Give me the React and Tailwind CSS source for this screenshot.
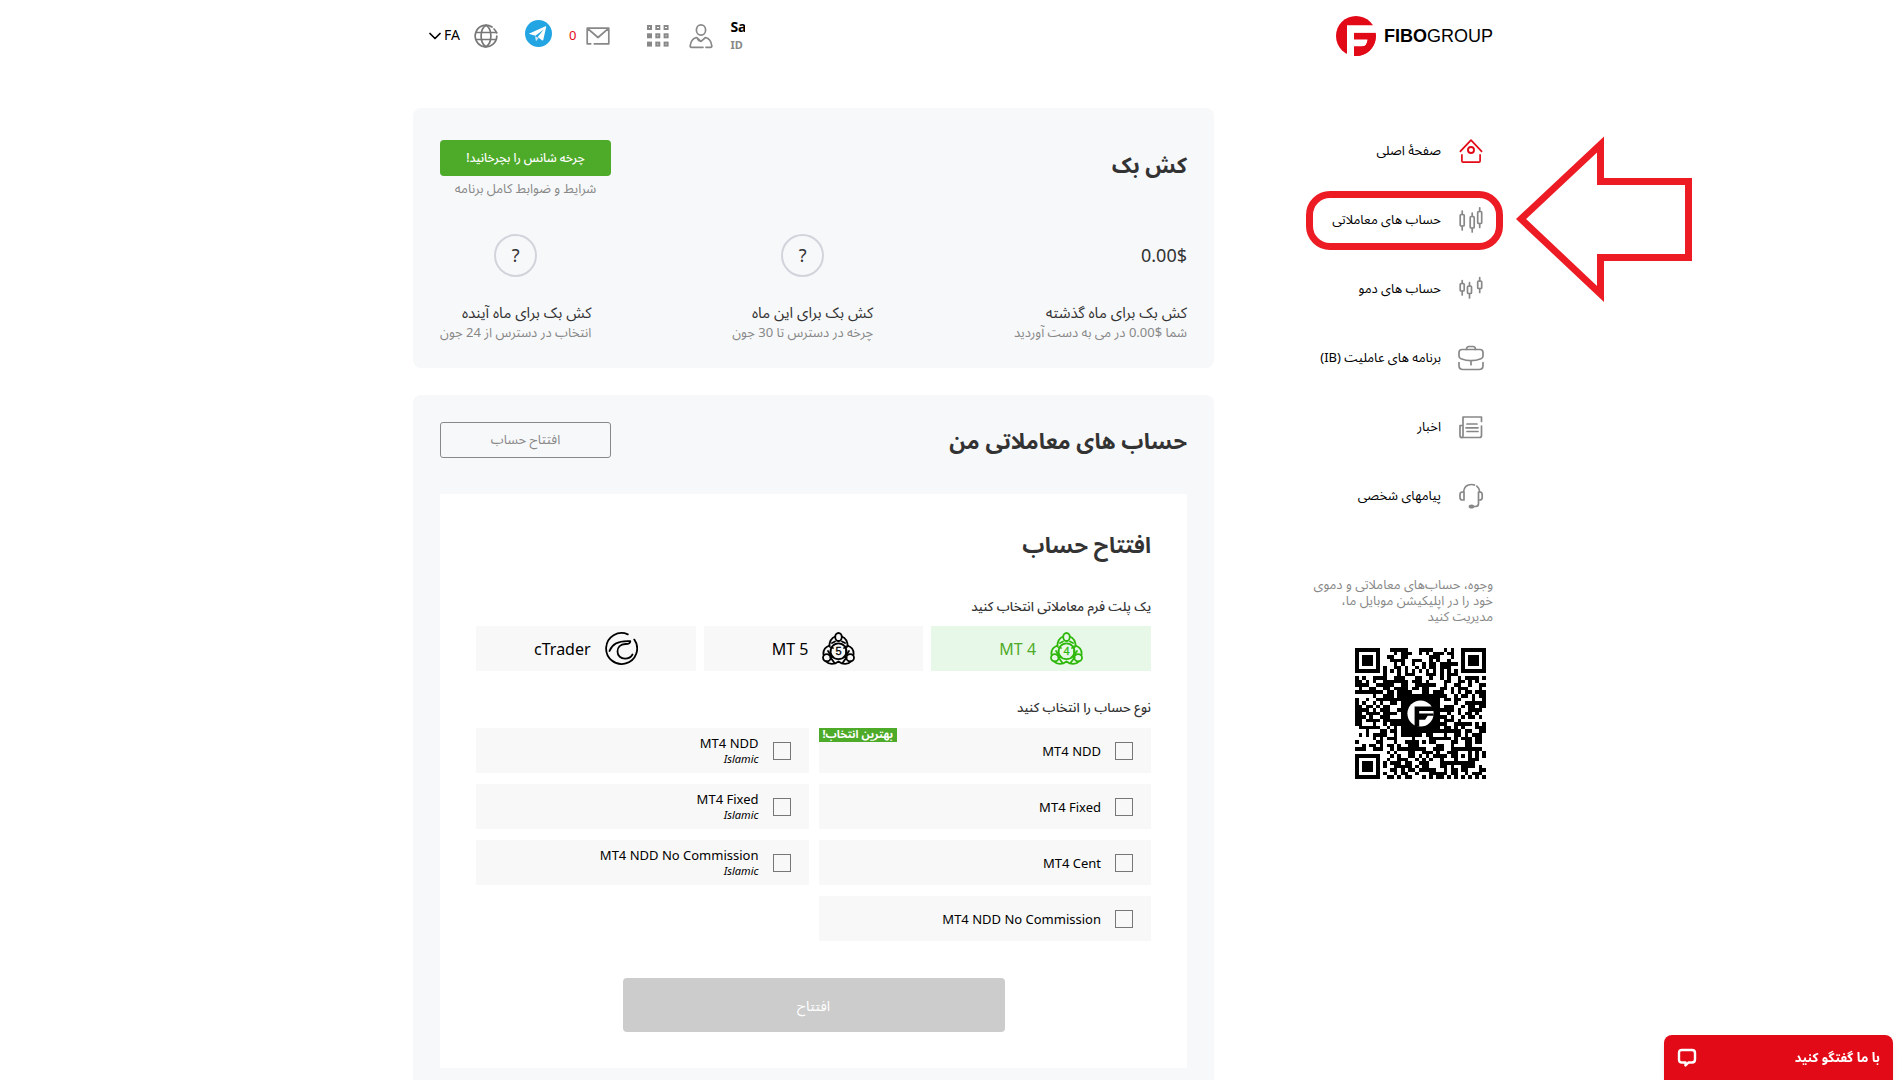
import React from "react";

const svgBase = {
  fill: "none",
  stroke: "currentColor",
  strokeWidth: 1.7,
  strokeLinecap: "round",
  strokeLinejoin: "round",
  "aria-hidden": true,
};

function HomeIcon() {
  return (
    <svg viewBox="0 0 24 26" className="h-[26px] w-6 text-[#e30a17]" {...svgBase} strokeLinecap="square">
      <path d="M1.500 13.200 12 2.200 22.500 13.200" />
      <circle cx="12" cy="12" r="3" strokeWidth="1.900" />
      <path d="M2.900 17v6q0 1.200 1.200 1.200h15.800q1.200 0 1.200-1.200v-6" />
    </svg>
  );
}

function CandlesIcon() {
  return (
    <svg viewBox="0 0 24 28" className="h-7 w-6" {...svgBase}>
      <rect x="1.200" y="8.500" width="4" height="11.500" rx="1" />
      <path d="M3.200 5v3.500M3.200 20v4" />
      <rect x="11.200" y="10.500" width="4" height="11.500" rx="1" />
      <path d="M13.200 7v3.500M13.200 22v4" />
      <rect x="18.700" y="5.500" width="4" height="12" rx="1" />
      <path d="M20.700 1.800v3.700M20.700 17.500v4" />
    </svg>
  );
}

function SmallCandlesIcon() {
  return (
    <svg viewBox="0 0 24 26" className="h-[26px] w-6" {...svgBase}>
      <rect x="1.200" y="7.500" width="4" height="7.500" rx="1" />
      <path d="M3.200 4.500v3M3.200 15v4" />
      <rect x="8.500" y="10" width="4" height="7.500" rx="1" />
      <path d="M10.500 6.500V10M10.500 17.500v4.500" />
      <rect x="18.700" y="5" width="4" height="7.500" rx="1" />
      <path d="M20.700 1.500V5M20.700 12.500v4" />
    </svg>
  );
}

function BriefcaseIcon() {
  return (
    <svg viewBox="0 0 26 26" className="h-[26px] w-[26px]" {...svgBase}>
      <path d="M1 7.500q0-3 3-3h18q3 0 3 3v3.500q0 2-2 2.800-10 3.800-20 0-2-.8-2-2.800z" />
      <path d="M8.500 4.500q0-3 2.500-3h4q2.500 0 2.500 3" />
      <path d="M1 17.500v3q0 4 4 4h16q4 0 4-4v-3M13 16.500v3.200" />
    </svg>
  );
}

function NewsIcon() {
  return (
    <svg viewBox="0 0 24 24" className="h-6 w-6" {...svgBase}>
      <path d="M22.500 6.500V2H4v18.500q0 2 -1.500 2-1.500 0-1.500-2V10.500h3" />
      <path d="M2.500 22.500h18q2 0 2-2V11" />
      <path d="M8 9h10M7 12.800h12M8 16.500h11" />
    </svg>
  );
}

function HeadsetIcon() {
  return (
    <svg viewBox="0 0 26 26" className="h-[26px] w-[26px]" {...svgBase}>
      <path d="M5.500 9C6 4 9 1.500 13.500 1.500q2 0 3 .6M18.800 3.200Q21.500 5.300 21.800 9" />
      <path d="M6 9v8H4.500q-2.500 0-2.500-2.500v-3Q2 9 4.500 9zM20.500 9v8h1.200q2.500 0 2.500-2.500v-3Q24.200 9 21.700 9z" />
      <path d="M20.500 17.500v3q0 3-3 3h-2.500" />
      <ellipse cx="13.500" cy="23.500" rx="2" ry="1.200" fill="currentColor" />
    </svg>
  );
}

function GlobeIcon() {
  return (
    <svg viewBox="0 0 24 24" className="h-6 w-6 text-[#777]" {...svgBase}>
      <path d="M22.800 8.500H2M2 15.500h20M22.800 12a10.800 10.800 0 1 1-4.800-9M20 5q2 2 2.600 4" />
      <path d="M12 1.200C5.500 5 5.500 19 12 22.800 18.500 19 18.500 5 12 1.200z" />
    </svg>
  );
}

function TelegramIcon() {
  return (
    <svg viewBox="0 0 27 27" className="h-[27px] w-[27px]" aria-hidden="true">
      <circle cx="13.500" cy="13.500" r="13.500" fill="#23a5e3" />
      <path d="M3.800 13.800 20.500 6.300q.9-.3.700.8L18.300 19.800q-.3 1.200-1.300.5l-4.300-3.200 6-7.500-8.300 6.200z" fill="#fff" />
      <path d="M10 16.300 11 21.200l2.600-3.200z" fill="#d4e9f5" />
    </svg>
  );
}

function MailIcon() {
  return (
    <svg viewBox="0 0 24 18" className="h-[18px] w-6 text-[#888]" {...svgBase} strokeLinecap="square">
      <path d="M4.500 16.800H1.200V1.200h21.600v15.600H8.500M1.500 1.500 12 10.500 22.500 1.500" />
    </svg>
  );
}

function GridIcon() {
  const steps = [1, 9.3, 17.6];
  return (
    <svg viewBox="0 0 22 22" className="h-[22px] w-[22px] text-[#888]" fill="none" stroke="currentColor" strokeWidth="2" aria-hidden="true">
      {steps.map((x) => steps.map((y) => <rect key={`${x}-${y}`} x={x} y={y} width="3" height="3" />))}
    </svg>
  );
}

function UserIcon() {
  return (
    <svg viewBox="0 0 24 26" className="h-[26px] w-6 text-[#888]" {...svgBase}>
      <ellipse cx="12" cy="7" rx="4.600" ry="5.200" />
      <path d="M17 24.300h4.500q1.500 0 1.300-1.500-.8-7-6.300-8.300L12 18.300l-4.500-3.800q-5.500 1.300-6.300 8.300-.2 1.500 1.300 1.500H14M12 18.300q-2.500 0-3.500-2.500" />
    </svg>
  );
}

function MetaTraderIcon({ digit }) {
  return (
    <svg viewBox="0 0 33 33" className="h-[33px] w-[33px]" {...svgBase} strokeWidth="1.800">
      <ellipse cx="16.500" cy="5" rx="3.300" ry="4" />
      <path d="M13.200 4.500C9 6 7.500 9.500 7.200 14.500L11 16M19.800 4.500C24 6 25.500 9.500 25.800 14.500L22 16" />
      <path d="M7.500 13.500C3 15 1 18.500 1.500 23M25.500 13.500C30 15 32 18.500 31.500 23" />
      <ellipse cx="4.800" cy="25.800" rx="3.800" ry="3.600" />
      <ellipse cx="28.200" cy="25.800" rx="3.800" ry="3.600" />
      <path d="M4 29.300C7 32.500 12 33 16.500 29.500 21 33 26 32.500 29 29.300" />
      <path d="M8.500 25.500 12.500 31M24.500 25.500 20.500 31M10 11l3-1.500M23 11l-3-1.500M6 19l4 6M27 19l-4 6" />
      <path d="M12.500 26.300A8 8 0 1 1 20.500 26.300q-4 1.800-8 0zM24 14.500v8" />
      <text x="16.500" y="23" textAnchor="middle" fontSize="11" fontFamily="Liberation Sans, sans-serif" fill="currentColor" stroke="currentColor" strokeWidth="0.300">
        {digit}
      </text>
    </svg>
  );
}

function CTraderIcon() {
  return (
    <svg viewBox="0 0 33 33" className="h-[33px] w-[33px]" {...svgBase} strokeWidth="1.800">
      <path d="M22.800 2.300A15.500 15.500 0 1 0 29.300 7.600" />
      <path d="M4.500 19C7 12 13 8.500 25.300 9.200 25.300 11.500 23.500 12 20.500 12 15 12 12.500 15.500 12.500 19.500c0 4.500 3.500 7.200 7.500 7.200 3.500 0 6-1.500 7.500-4.200" />
    </svg>
  );
}

const QR_SIZE = 37;

function cellNoise(r, c) {
  let t = (r * 374761393 + c * 668265263) | 0;
  t = Math.imul(t ^ (t >>> 13), 1274126177);
  t = Math.imul(t ^ (t >>> 15), 2246822519);
  return ((t ^ (t >>> 16)) >>> 0) / 4294967296;
}

function qrModules() {
  const cells = [];
  const level = (r, c, cr, cc) => Math.max(Math.abs(r - cr), Math.abs(c - cc));
  const finders = [[3, 3], [3, QR_SIZE - 4], [QR_SIZE - 4, 3]];
  for (let r = 0; r < QR_SIZE; r++) {
    for (let c = 0; c < QR_SIZE; c++) {
      let on = cellNoise(r, c) < 0.52;
      if (r === 6 || c === 6) on = (r + c) % 2 === 0;
      if (level(r, c, 30, 30) <= 2) on = level(r, c, 30, 30) !== 1;
      for (const [fr, fc] of finders) {
        const d = level(r, c, fr, fc);
        if (d <= 4) on = d === 3 || d <= 1;
      }
      if (on) cells.push([r, c]);
    }
  }
  return cells;
}

function QrCode() {
  return (
    <svg viewBox="0 0 37 37" className="h-[131px] w-[131px]" shapeRendering="crispEdges" role="img" aria-label="QR">
      <path d={qrModules().map(([r, c]) => `M${c} ${r}h1v1h-1z`).join("")} fill="#000" />
      <rect x="13" y="13" width="11" height="11" fill="#000" />
      <g transform="translate(14.800 14.800) scale(0.185)" shapeRendering="auto">
        <circle cx="20" cy="20" r="20" fill="#fff" />
        <path d="M11 9.500h29v6.500H18v4h22v3.500h-9l-4 6h-9v10.500h-7z" fill="#000" />
      </g>
    </svg>
  );
}

function Logo() {
  return (
    <a href="#" dir="ltr" className="flex items-center gap-2 font-['Liberation_Sans',sans-serif] text-[18px] leading-6 text-black">
      <svg viewBox="0 0 40 40" className="h-10 w-10" aria-hidden="true">
        <circle cx="20" cy="20" r="20" fill="#e30a17" />
        <path d="M11 9.300h29V16H18v14h9.500q3 0 4-7H18v-5h21.500V16H18v24h-7z" fill="#fff" />
        <path d="M18 16.500h21.700V20Q39.500 30 32 36 26 40.200 18 40v-9.500h8q5 0 5.500-6.500H18z" fill="#e30a17" />
        <path d="M18 15.500h22v1.200H18zM18 23.500h13.500q-.8 6.800-5.500 6.800h-8z" fill="#fff" />
      </svg>
      <span><b>FIBO</b>GROUP</span>
    </a>
  );
}

const navItems = [
  { label: "صفحهٔ اصلی", Icon: HomeIcon },
  { label: "حساب های معاملاتی", Icon: CandlesIcon, marked: true },
  { label: "حساب های دمو", Icon: SmallCandlesIcon },
  { label: "برنامه های عاملیت (IB)", Icon: BriefcaseIcon },
  { label: "اخبار", Icon: NewsIcon },
  { label: "پیامهای شخصی", Icon: HeadsetIcon },
];

const rows = [
  [{ name: "MT4 NDD", best: true }, { name: "MT4 NDD", islamic: true }],
  [{ name: "MT4 Fixed" }, { name: "MT4 Fixed", islamic: true }],
  [{ name: "MT4 Cent" }, { name: "MT4 NDD No Commission", islamic: true }],
  [{ name: "MT4 NDD No Commission" }],
];

function AccountOption({ name, islamic, best }) {
  return (
    <label className="relative flex h-[45px] items-center gap-3.5 bg-[#f8f8f8] ps-[18px] text-black">
      <input type="checkbox" className="size-[18px] shrink-0 appearance-none border border-[#777] checked:bg-[#4eaa29]" />
      <span dir="ltr" className="flex flex-col text-right text-[13px] leading-4">
        {name}
        {islamic && <i className="text-[11px] leading-4">Islamic</i>}
      </span>
      {best && (
        <span className="absolute end-0 top-0 h-3.5 bg-[#4eaa29] px-1 text-[11px] leading-3 font-bold text-white">
          بهترین انتخاب!
        </span>
      )}
    </label>
  );
}

function Header() {
  return (
    <header className="flex h-[71px] items-center justify-between">
      <Logo />
      <div dir="ltr" className="flex items-center ps-4">
        <button type="button" className="flex items-center text-[14px] leading-5 text-black">
          <svg viewBox="0 0 12 8" className="me-[3px] h-2 w-3" {...svgBase}>
            <path d="M1 1.500 6 6.500 11 1.500" />
          </svg>
          <span className="pb-0.5">FA</span>
          <span className="ms-3.5"><GlobeIcon /></span>
        </button>
        <a href="#" aria-label="Telegram" className="ms-[27px] pb-1"><TelegramIcon /></a>
        <a href="#" aria-label="Messages" className="ms-[17px] flex items-center gap-2.5 text-[13px] text-[#e30a17]">
          0<MailIcon />
        </a>
        <button type="button" aria-label="Menu" className="ms-[37px]"><GridIcon /></button>
        <button type="button" className="ms-5 flex items-center gap-[17px] text-left">
          <UserIcon />
          <span className="w-[15px] overflow-hidden whitespace-nowrap">
            <b className="block text-[14px] leading-[18px] text-black">Sa</b>
            <b className="block text-[11px] leading-[18px] text-[#888]">ID</b>
          </span>
        </button>
      </div>
    </header>
  );
}

function Sidebar() {
  return (
    <aside className="w-[187px] shrink-0 pt-2">
      <nav>
        {navItems.map(({ label, Icon, marked }) => (
          <a key={label} href="#" className="relative flex h-[69px] items-center gap-[17px] ps-[9px] text-[13px] text-black">
            <span className="flex w-[26px] shrink-0 justify-center text-[#888]"><Icon /></span>
            {label}
            {marked && (
              <>
                <span className="absolute -right-2.5 left-0 top-1.5 h-[59px] rounded-[24px] border-7 border-[#ed1c24]" />
                <svg viewBox="0 0 176 168" className="absolute left-[210px] top-[-50px] h-[168px] w-44" aria-hidden="true">
                  <path d="M5 84 84.500 9.500V46.500H172.500V122.500H84.500V159z" fill="#fff" stroke="#ed1c24" strokeWidth="7" />
                </svg>
              </>
            )}
          </a>
        ))}
      </nav>
      <p className="mt-[46px] w-[182px] text-[13px] leading-4 text-[#888]">
        وجوه، حساب‌های معاملاتی و دموی خود را در اپلیکیشن موبایل ما، مدیریت کنید
      </p>
      <div className="ms-[7px] mt-6"><QrCode /></div>
    </aside>
  );
}

function CashbackColumn({ title, note, children, round }) {
  return (
    <div>
      <div className={round ? "flex justify-center" : "flex"}>
        {round ? (
          <button type="button" className="size-[43px] rounded-full border-2 border-[#d3d3dc] text-[18px] text-[#333]">?</button>
        ) : (
          <span className="text-[18px] leading-[43px]">{children}</span>
        )}
      </div>
      <h3 className="mt-[25px] text-[15px] leading-5">{title}</h3>
      <p className="text-[13px] leading-5 text-[#888]">{note}</p>
    </div>
  );
}

export default function App() {
  return (
    <div dir="rtl" className="min-h-screen overflow-x-hidden bg-white pl-1 font-['Noto_Sans','Noto_Sans_Arabic',sans-serif] text-[#333]">
      <div className="mx-auto flex min-h-screen max-w-[1080px] flex-col">
        <Header />
        <div className="mt-[37px] flex flex-1 gap-[92px]">
          <Sidebar />
          <main className="flex min-w-0 flex-1 flex-col gap-[27px]">
            <section className="rounded-lg bg-[#f7f8fa] px-[27px] pt-8 pb-[26px]">
              <div className="flex justify-between">
                <h2 className="pt-1.5 text-[22px] leading-9 font-bold">کش بک</h2>
                <div className="w-[171px] text-center">
                  <button type="button" className="h-9 w-full rounded bg-[#4eaa29] text-[12px] font-medium text-white">چرخه شانس را بچرخانید!</button>
                  <a href="#" className="mt-0.5 block text-[13px] leading-5 text-[#888]">شرایط و ضوابط کامل برنامه</a>
                </div>
              </div>
              <div className="mt-9 flex justify-between">
                <CashbackColumn title="کش بک برای ماه گذشته" note="شما $0.00 در می به دست آوردید">
                  <bdi dir="ltr">0.00$</bdi>
                </CashbackColumn>
                <CashbackColumn round title="کش بک برای این ماه" note="چرخه در دسترس تا 30 جون" />
                <CashbackColumn round title="کش بک برای ماه آینده" note="انتخاب در دسترس از 24 جون" />
              </div>
            </section>

            <section className="flex-1 rounded-t-lg bg-[#f7f8fa] px-[27px] pt-[27px] pb-[11px]">
              <div className="flex items-center justify-between">
                <h2 className="text-[22px] leading-9 font-bold">حساب های معاملاتی من</h2>
                <button type="button" className="h-9 w-[171px] rounded-[3px] border border-[#888] text-[13px] text-[#888]">افتتاح حساب</button>
              </div>
              <form className="mt-9 bg-white px-9 pt-8 pb-9" onSubmit={(e) => e.preventDefault()}>
                <h2 className="text-[22px] leading-9 font-bold">افتتاح حساب</h2>
                <h3 className="mt-8 text-[13px] leading-6 font-medium">یک پلت فرم معاملاتی انتخاب کنید</h3>
                <div className="mt-2 grid grid-cols-3 gap-2 text-[16px] text-black">
                  <button type="button" className="flex h-[45px] items-center justify-center gap-3.5 bg-[#e8f8e8] text-[#4eaa29]">
                    <span className="text-[#2fb80c]"><MetaTraderIcon digit="4" /></span>
                    <bdi>MT 4</bdi>
                  </button>
                  <button type="button" className="flex h-[45px] items-center justify-center gap-3.5 bg-[#f8f8f8]">
                    <MetaTraderIcon digit="5" />
                    <bdi>MT 5</bdi>
                  </button>
                  <button type="button" className="flex h-[45px] items-center justify-center gap-3.5 bg-[#f8f8f8]">
                    <CTraderIcon />
                    <bdi>cTrader</bdi>
                  </button>
                </div>
                <h3 className="mt-6 text-[13px] leading-6 font-medium">نوع حساب را انتخاب کنید</h3>
                <div className="mt-[9px] grid grid-cols-2 gap-x-2.5 gap-y-[11px]">
                  {rows.flat().map((option, i) => <AccountOption key={i} {...option} />)}
                </div>
                <button type="submit" className="mx-auto mt-[37px] block h-[54px] w-[382px] max-w-full rounded bg-[#ccc] text-[14px] text-white">افتتاح</button>
              </form>
            </section>
          </main>
        </div>
      </div>

      <button type="button" className="fixed right-[9px] bottom-0 flex h-[45px] w-[229px] items-center justify-between rounded-t-lg bg-[#e30a17] px-[13px] text-[13px] font-bold text-white shadow-md">
        با ما گفتگو کنید
        <svg viewBox="0 0 20 20" className="h-5 w-5" {...svgBase} strokeWidth="2.400">
          <path d="M5 2h10q3 0 3 3v6.500q0 3-3 3h-3.500L8.500 17.500v-3H5q-3 0-3-3V5q0-3 3-3z" />
        </svg>
      </button>
    </div>
  );
}
